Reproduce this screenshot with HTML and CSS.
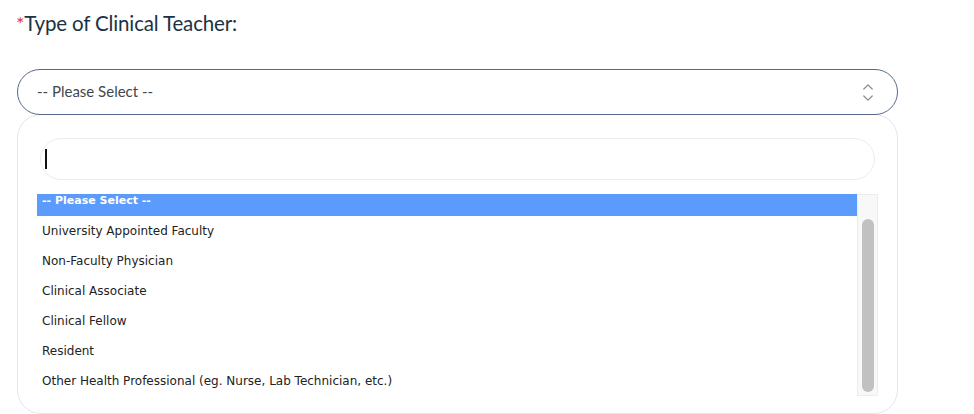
FILE: index.html
```html
<!DOCTYPE html>
<html>
<head>
<meta charset="utf-8">
<link rel="stylesheet" href="styles.css">
</head>
<body>
<div class="field">
  <label class="label"><span class="req">*</span>Type of Clinical Teacher:</label>
  <div class="select">
    <span class="select-text">-- Please Select --</span>
    <svg class="arrows" width="10" height="17" viewBox="0 0 10 17">
      <path d="M0.8 5 L5 0.8 L9.2 5" fill="none" stroke="#8a8a8a" stroke-width="1.2" stroke-linecap="round" stroke-linejoin="round"/>
      <path d="M0.8 12 L5 16.2 L9.2 12" fill="none" stroke="#8a8a8a" stroke-width="1.2" stroke-linecap="round" stroke-linejoin="round"/>
    </svg>
  </div>
  <div class="panel">
    <div class="search"><span class="caret"></span></div>
    <div class="listbox">
      <div class="options">
        <div class="opt selected">-- Please Select --</div>
        <div class="opt">University Appointed Faculty</div>
        <div class="opt">Non-Faculty Physician</div>
        <div class="opt">Clinical Associate</div>
        <div class="opt">Clinical Fellow</div>
        <div class="opt">Resident</div>
        <div class="opt">Other Health Professional (eg. Nurse, Lab Technician, etc.)</div>
      </div>
      <div class="track"><div class="thumb"></div></div>
    </div>
  </div>
</div>
</body>
</html>
```

FILE: styles.css
```css
html, body {
  margin: 0;
  padding: 0;
  background: #ffffff;
}
body {
  font-family: "Lato", "Liberation Sans", sans-serif;
  overflow: hidden;
  height: 414px;
}
.field {
  width: 881px;
  margin-left: 17px;
  padding-top: 9px;
}
.label {
  display: block;
  font-size: 20.5px;
  line-height: 28px;
  color: #1c3242;
  height: 60px;
  margin-left: -1px;
  letter-spacing: -0.15px;
}
.req {
  color: #e8344c;
  font-size: 20px;
}
.select {
  position: relative;
  z-index: 2;
  box-sizing: border-box;
  height: 46px;
  border: 1px solid #56698a;
  border-radius: 23px;
  background: #fff;
  display: flex;
  align-items: center;
  justify-content: space-between;
  padding: 0 24px 3px 19px;
}
.select-text {
  font-size: 15px;
  color: #41484d;
}
.arrows {
  display: block;
  margin-top: 3px;
}
.panel {
  box-sizing: border-box;
  height: 300px;
  margin-top: -1px;
  border: 1px solid #e3e6ea;
  border-radius: 24px;
  padding: 23px 19px 0 19px;
}
.search {
  box-sizing: border-box;
  height: 42px;
  margin: 0 3px;
  border: 1px solid #ececec;
  border-radius: 21px;
  display: flex;
  align-items: center;
  padding-left: 4px;
}
.caret {
  width: 1.5px;
  height: 20px;
  background: #111;
}
.listbox {
  margin-top: 14px;
  height: 202px;
  display: flex;
  overflow: hidden;
  font-family: "DejaVu Sans", sans-serif;
  font-size: 12px;
  color: #222;
}
.options {
  flex: 1;
  overflow: hidden;
}
.opt {
  height: 30px;
  line-height: 30px;
  padding-left: 5px;
  white-space: nowrap;
}
.opt.selected {
  margin-top: -8px;
  background: #5b9bfb;
  color: #fff;
  font-weight: bold;
  font-size: 11px;
}
.track {
  box-sizing: border-box;
  width: 21px;
  background: #f8f8f8;
  border: 1px solid #ececec;
  padding: 24px 3px 3px 4px;
}
.thumb {
  height: 100%;
  width: 12px;
  border-radius: 6px;
  background: #c1c1c1;
}
```
